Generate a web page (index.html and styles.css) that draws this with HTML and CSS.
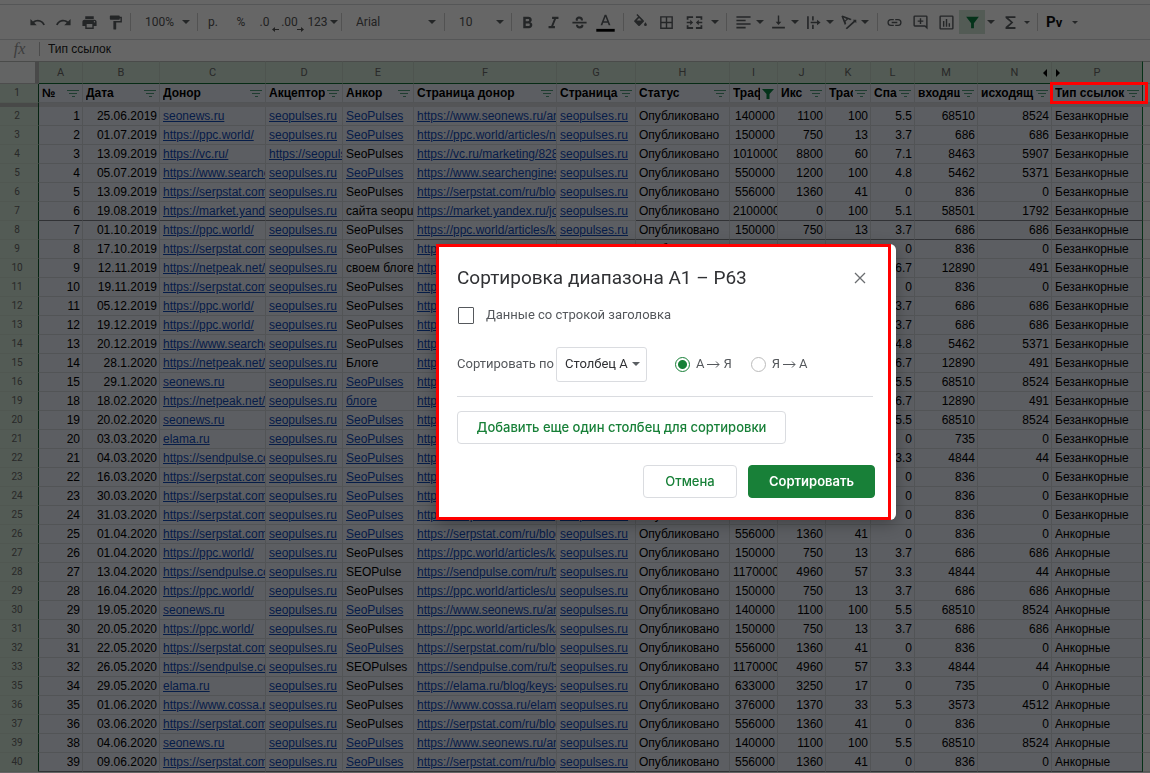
FILE: index.html
```html
<!DOCTYPE html>
<html lang="ru">
<head>
<meta charset="utf-8">
<title>Таблица</title>
<link rel="stylesheet" href="styles.css">
</head>
<body>
<main class="app">
  <div class="toolbar" role="toolbar">
    <button class="tool" aria-label="Отменить"><svg class="icon" viewBox="0 0 24 24"><path d="M12.5 8c-2.65 0-5.05 1-6.9 2.6L2 7v9h9l-3.6-3.6c1.4-1.2 3.1-1.9 5.1-1.9 3.5 0 6.6 2.3 7.6 5.5l2.4-.8C21.1 11 17.2 8 12.500 8z"/></svg></button>
    <button class="tool" aria-label="Повторить"><svg class="icon" viewBox="0 0 24 24"><path d="M18.400 10.600C16.550 9 14.150 8 11.500 8c-4.650 0-8.600 3-10 7.200l2.400.8c1-3.200 4.100-5.500 7.600-5.500 2 0 3.700.7 5.100 1.900L13 16h9V7z"/></svg></button>
    <button class="tool" aria-label="Печать"><svg class="icon" viewBox="0 0 24 24"><path d="M19 8H5c-1.700 0-3 1.300-3 3v6h4v4h12v-4h4v-6c0-1.700-1.300-3-3-3zm-3 11H8v-5h8zm3-7a1 1 0 1 1 0-2 1 1 0 0 1 0 2zM18 3H6v4h12z"/></svg></button>
    <button class="tool" aria-label="Копировать форматирование"><svg class="icon" viewBox="0 0 24 24"><path d="M18 4V3c0-.6-.4-1-1-1H5c-.6 0-1 .4-1 1v4c0 .6.4 1 1 1h12c.6 0 1-.4 1-1V6h1v4H9v11c0 .6.4 1 1 1h2c.6 0 1-.4 1-1v-9h8V4z"/></svg></button>
    <span class="sep sep-l"></span>
    <span class="pick pick-s"><select aria-label="Масштаб"><option>100%</option></select><i class="caret"></i></span>
    <span class="sep"></span>
    <button class="tool first">р.</button>
    <button class="tool">%</button>
    <button class="tool decimal">.0<svg class="under" viewBox="0 0 7 5"><path d="M0 2.500 3 0v2h4v1H3v2z"/></svg></button>
    <button class="tool decimal">.00<svg class="under" viewBox="0 0 7 5"><path d="M7 2.500 4 0v2H0v1h4v2z"/></svg></button>
    <button class="tool format">123<i class="caret"></i></button>
    <span class="sep"></span>
    <span class="pick pick-l"><select aria-label="Шрифт"><option>Arial</option></select><i class="caret"></i></span>
    <span class="sep"></span>
    <span class="pick pick-s"><select aria-label="Размер"><option>10</option></select><i class="caret"></i></span>
    <span class="sep sep-r"></span>
    <button class="tool" aria-label="Полужирный"><svg class="icon" viewBox="0 0 24 24"><path d="M16 11.800c1.200-.8 2-2 2-3.300C18 5.700 15.900 4 13.200 4H6v16h8.100c2.700 0 4.700-2 4.700-4.500 0-1.800-1.100-3.100-2.800-3.700zM9.500 7h3.300c1 0 1.700.6 1.700 1.600s-.7 1.700-1.700 1.700H9.500zm4 10h-4v-3.600h4c1 0 1.800.7 1.800 1.800s-.8 1.800-1.800 1.800z"/></svg></button>
    <button class="tool" aria-label="Курсив"><svg class="icon" viewBox="0 0 24 24"><path d="M10 4v3h2.700l-4 10H5v3h9v-3h-2.400l4-10H19V4z"/></svg></button>
    <button class="tool" aria-label="Зачеркнутый"><svg class="icon" viewBox="0 0 24 24"><path d="M2 11h20v2.500H2zM17 9h-3c0-1.600-1-2.300-2.300-2.300S9.500 7.300 9.500 8.300c0 .7.300 1 .8 1.400H7c-1.300-3.400 1.300-6 4.800-6S17 5.700 17 9zM7 15h3c0 1.500 1 2.300 2.400 2.300 1.300 0 2.200-.6 2.200-1.600 0-.3 0-.5-.2-.7h3c.8 3-1.400 5.300-5 5.300S7 18 7 15z"/></svg></button>
    <button class="tool" aria-label="Цвет текста"><svg class="icon" viewBox="0 0 24 24"><path d="M10.800 1 5 16h2.500l1.300-3.500h6.400l1.300 3.500H19L13.200 1zm-1.200 9.300L12 3.800l2.400 6.500z"/><path class="black" d="M-1 21h26v4H-1z"/></svg></button>
    <span class="sep sep-m"></span>
    <button class="tool" aria-label="Цвет заливки"><svg class="icon" viewBox="0 0 24 24"><path d="M16.600 9 7.600 0 6.200 1.400l2.400 2.400-5.200 5.200a1.500 1.500 0 0 0 0 2.100l5.500 5.500c.6.6 1.500.6 2.100 0l5.500-5.500c.6-.6.6-1.500.1-2.100zM19 11.500s-2 2.200-2 3.500a2 2 0 0 0 4 0c0-1.300-2-3.500-2-3.500zM6.600 9 10 5.600 13.400 9z" fill-rule="evenodd"/></svg></button>
    <button class="tool" aria-label="Границы"><svg class="icon" viewBox="0 0 24 24"><path d="M3 3v18h18V3zm8 16H5v-6h6zm0-8H5V5h6zm8 8h-6v-6h6zm0-8h-6V5h6z"/></svg></button>
    <button class="split merge" aria-label="Объединить ячейки"><svg class="icon" viewBox="0 0 24 24"><path d="M1 3h9v2.500H3.500V8H1zm13 0h9v5h-2.500V5.500H14zM1 16h2.500v2.500H10V21H1zm19.500 0H23v5h-9v-2.500h6.500zM1 11h5V8l4 4-4 4v-3H1zm22 0h-5V8l-4 4 4 4v-3h5z"/></svg><i class="caret"></i></button>
    <span class="sep sep-m"></span>
    <button class="split" aria-label="Выравнивание"><svg class="icon" viewBox="0 0 24 24"><path d="M2 3h20v2.300H2zm0 5h13v2.300H2zm0 5h20v2.300H2zm0 5h13v2.300H2z"/></svg><i class="caret"></i></button>
    <button class="split" aria-label="Вертикальное выравнивание"><svg class="icon" viewBox="0 0 24 24"><path d="M16 11h-3V2h-2v9H8l4 4.500zM3 18h18v2.500H3z"/></svg><i class="caret"></i></button>
    <button class="split" aria-label="Перенос текста"><svg class="icon" viewBox="0 0 24 24"><path d="M3 3h2.300v18H3zm7 0h2.300v6H10zm0 12h2.300v6H10zm-2-4h9V8l5 4-5 4v-3H8z"/></svg><i class="caret"></i></button>
    <button class="split" aria-label="Поворот текста"><svg class="icon" viewBox="0 0 24 24"><path fill-rule="evenodd" d="M2 3.200 3.500 2l13 5-2 1.700-3-1.200-3.700 3.200 1 3-2 1.700zM5 5l2 4 2.300-2zM8 20 19.500 9.500 18 8h5v5l-1.700-1.700L9.800 21.700z"/></svg><i class="caret"></i></button>
    <span class="sep sep-x"></span>
    <button class="tool" aria-label="Вставить ссылку"><svg class="icon" viewBox="0 0 24 24"><path d="M3.900 12c0-1.700 1.400-3.100 3.100-3.100h4V7H7a5 5 0 0 0 0 10h4v-1.900H7A3.100 3.100 0 0 1 3.900 12zM8 13h8v-2H8zm9-6h-4v1.900h4a3.100 3.100 0 0 1 0 6.200h-4V17h4a5 5 0 0 0 0-10z"/></svg></button>
    <button class="tool" aria-label="Комментарий"><svg class="icon" viewBox="0 0 24 24"><path fill-rule="evenodd" d="M4 2h16a2 2 0 0 1 2 2v18l-4-4H4a2 2 0 0 1-2-2V4a2 2 0 0 1 2-2zm0 14h14.800l1.200 1.200V4H4zM11 6h2v3h3v2h-3v3h-2v-3H8V9h3z"/></svg></button>
    <button class="tool" aria-label="Диаграмма"><svg class="icon" viewBox="0 0 24 24"><path fill-rule="evenodd" d="M20 2H4a2 2 0 0 0-2 2v16c0 1.100.9 2 2 2h16a2 2 0 0 0 2-2V4a2 2 0 0 0-2-2zm0 18H4V4h16zM7 10h2v8H7zm4-3h2v11h-2zm4 6h2v5h-2z"/></svg></button>
    <button class="tool on" aria-label="Фильтр"><svg class="icon" viewBox="0 0 24 24"><path d="M3 4h18l-7 9v7h-4v-7z"/></svg></button>
    <i class="caret lone"></i>
    <button class="split sum" aria-label="Функции"><svg class="icon" viewBox="0 0 24 24"><path d="M19 3H5v2.500l7.500 6.500L5 18.500V21h14v-2.500H9l7-6.500-7-6.500h10z"/></svg><i class="caret small"></i></button>
    <span class="sep sep-m"></span>
    <button class="split script"><b>Р<small>v</small></b><i class="caret small"></i></button>
  </div>

  <div class="formula">
    <label class="fx" for="fx">fx</label>
    <input id="fx" class="fx-input" value="Тип ссылок">
  </div>

  <table class="sheet">
    <colgroup><col class="c-n"><col class="c-a"><col class="c-b"><col class="c-c"><col class="c-b"><col class="c-e"><col class="c-f"><col class="c-g"><col class="c-h"><col class="c-i"><col class="c-i"><col class="c-k"><col class="c-a"><col class="c-m"><col class="c-o"><col class="c-p"><col></colgroup>
    <thead>
      <tr class="letters"><th class="corner"></th><th>A</th><th>B</th><th>C</th><th>D</th><th>E</th><th>F</th><th>G</th><th>H</th><th>I</th><th>J</th><th>K</th><th>L</th><th>M</th><th class="before">N</th><th class="after">P</th><th class="rest"></th></tr>
      <tr class="titles" id="titles"><th class="num">1</th></tr>
      <tr class="freeze"><th class="num"></th><td colspan="15"></td><td class="rest"></td></tr>
    </thead>
    <tbody id="rows"></tbody>
  </table>
</main>

<div class="backdrop"></div>
<div class="mark-header"></div>

<form class="dialog" role="dialog" aria-labelledby="dlg-title">
  <div class="dialog-head">
    <h1 class="dialog-title" id="dlg-title">Сортировка диапазона A1 – P63</h1>
    <button type="button" class="close" aria-label="Закрыть"><svg viewBox="0 0 12 12"><path d="M1 1l10 10M11 1 1 11"/></svg></button>
  </div>
  <label class="check"><input type="checkbox">Данные со строкой заголовка</label>
  <div class="sort-row">
    <label for="col">Сортировать по</label>
    <span class="column-pick"><select id="col"><option>Столбец A</option></select><i class="caret"></i></span>
    <label class="radio"><input type="radio" name="dir" checked>А<svg class="arrow" viewBox="0 0 13 7"><path d="M0 3.500h12M9 .5l3 3-3 3"/></svg>Я</label>
    <label class="radio"><input type="radio" name="dir">Я<svg class="arrow" viewBox="0 0 13 7"><path d="M0 3.500h12M9 .5l3 3-3 3"/></svg>А</label>
  </div>
  <button type="button" class="btn btn-add">Добавить еще один столбец для сортировки</button>
  <div class="actions">
    <button type="button" class="btn btn-cancel">Отмена</button>
    <button type="button" class="btn btn-sort">Сортировать</button>
  </div>
  <div class="mark-dialog"></div>
</form>
<script src="sheet.js"></script>
</body>
</html>
```
FILE: styles.css
```css
* { box-sizing: border-box; }
body { margin: 0; background: #fff; font-family: "Liberation Sans", Arial, sans-serif; overflow: hidden; }
button, select, input { font: inherit; color: inherit; }
button { background: none; border: 0; padding: 0; }
select { appearance: none; background: none; border: 0; padding: 0; outline: 0; }

.app { padding-top: 4px; color: #444; }
.toolbar { display: flex; align-items: center; height: 36px; padding-left: 24px; border-top: 1px solid #d4d6d9; border-bottom: 1px solid #d4d6d9; font: 12px/16px Roboto, sans-serif; color: #555; white-space: nowrap; }
.tool { flex: none; display: flex; align-items: center; justify-content: center; width: 26px; height: 24px; }
.icon { flex: none; width: 17px; height: 17px; fill: #5b5f63; overflow: visible; }
.black { fill: #000; }
.sep { flex: none; width: 1px; height: 18px; background: #ccc; }
.sep-l { margin-left: 2px; }
.sep-r { margin-right: 2px; }
.sep-m { margin: 0 3px 0 5px; }
.sep-x { margin: 0 3px 0 7px; }
.caret { flex: none; width: 0; height: 0; border: 4px solid transparent; border-top-color: #5b5f63; border-bottom: 0; }
.caret.small { border-width: 3px; border-bottom: 0; }
.caret.lone { margin: 0 2px; }
.pick { flex: none; display: flex; align-items: center; justify-content: space-between; padding: 0 7px 0 14px; }
.pick-s { width: 66px; }
.pick-l { width: 102px; padding-right: 8px; }
.first { width: 30px; }
.decimal { position: relative; width: 25px; padding-right: 4px; }
.under { position: absolute; right: 0; bottom: 2px; width: 7px; height: 5px; fill: #555; }
.format { width: 37px; gap: 2px; }
.split { flex: none; display: flex; align-items: center; gap: 4px; width: 35px; height: 24px; padding-left: 5px; }
.merge { width: 42px; gap: 8px; padding-left: 7px; }
.on { background: #cfe3d5; }
.on .icon { fill: #0b8043; }
.sum { gap: 5px; }
.script { gap: 10px; }
.script b { font: 700 15px/16px Roboto, sans-serif; color: #111; }
.script small { font-size: 13px; }

.formula { display: flex; align-items: center; height: 21px; padding-bottom: 3px; }
.fx { width: 40px; height: 14px; border-right: 1px solid #bbb; text-align: center; font: italic 16px/14px "Liberation Serif", serif; color: #999; }
.fx-input { flex: 1; border: 0; padding: 0 8px; background: none; font-size: 12px; line-height: 16px; color: #222; outline: 0; }

.sheet { width: 100%; table-layout: fixed; border-collapse: separate; border-spacing: 0; font-size: 12px; line-height: 17px; color: #000; }
.c-n { width: 39px; } .c-a { width: 44px; } .c-b { width: 77px; } .c-c { width: 106px; }
.c-e { width: 71px; } .c-f { width: 143px; } .c-g { width: 79px; } .c-h { width: 94px; }
.c-i { width: 48px; } .c-k { width: 45px; } .c-m { width: 63px; } .c-o { width: 74px; } .c-p { width: 91px; }
.sheet th, .sheet td { height: 19px; padding: 1px 2px 0 3px; border-right: 1px solid #ced1d8; border-bottom: 1px solid #ced1d8; background: #e6ebf5; overflow: hidden; white-space: nowrap; text-align: left; }
.sheet .letters th { position: relative; height: 23px; padding: 0; background: #d0e4d4; border-top: 1px solid #b8bcba; border-right-color: #c3d3c6; border-bottom-color: #0f6b33; text-align: center; font: 11px/18px Roboto, sans-serif; color: #666; }
.sheet .letters .corner { background: #f8f9fa; border-right: 4px solid #b7b7b7; border-bottom-color: #c0c0c0; }
.before::after, .after::before { content: ""; position: absolute; top: 7px; border: 4px solid transparent; }
.before::after { right: 4px; border-right-color: #000; border-left: 0; }
.after::before { left: 4px; border-left-color: #000; border-right: 0; }
.sheet .num { padding: 0 4px 0 0; background: #d0e4d4; border-right-color: #0f5a2c; border-bottom-color: #c8dacb; text-align: center; font: 10px/16px Roboto, sans-serif; color: #666; }
.sheet .rest, .sheet .letters .rest { background: #fff; border-right: 0; border-bottom-color: #d8d8d8; }
.sheet .last, .sheet .letters .after { border-right-color: #0f7a3a; }
.sheet .freeze th, .sheet .freeze td { height: 4px; padding: 0; border-bottom: 0; background: #d2d4d9; }
.sheet .freeze .num { background: #b3b7b4; }
.sheet .freeze .rest { background: #ddd; }
.title { display: flex; align-items: center; gap: 2px; padding-right: 1px; font-weight: 700; }
.title-text { flex: 1; overflow: hidden; }
.filter { flex: none; width: 12px; height: 8px; fill: #4f9a78; }
.filter.active { height: 10px; fill: #0b8043; }
.sheet td.right { text-align: right; }
.sheet td.dark { border-bottom-color: #7b7e84; }
.sheet a { color: #1149b5; }

.backdrop { position: fixed; inset: 0; background: rgba(0, 0, 0, .6); }
.mark-header { position: absolute; left: 1050px; top: 82px; width: 98px; height: 22px; border: 3px solid #f00; }

.dialog { position: absolute; left: 436px; top: 244px; width: 460px; padding: 20px 21px 22px; border-radius: 6px; background: #fff; box-shadow: 0 4px 16px rgba(0, 0, 0, .3); font: 13px/18px Roboto, sans-serif; color: #55585c; }
.mark-dialog { position: absolute; inset: 0 5px 0 0; border: 3px solid #f00; pointer-events: none; }
.dialog-head { display: flex; align-items: center; justify-content: space-between; height: 28px; padding-right: 9px; }
.dialog-title { margin: 0; font: 400 19px/28px Roboto, sans-serif; color: #303134; }
.close { width: 12px; height: 12px; }
.close svg { display: block; width: 12px; height: 12px; stroke: #6a6d70; stroke-width: 1.300; fill: none; }
.check { display: flex; align-items: center; gap: 12px; margin: 14px 0 0 1px; }
.check input { appearance: none; width: 16px; height: 17px; margin: 0; border: 1px solid #55585c; border-radius: 1px; }
.sort-row { display: flex; align-items: center; height: 73px; border-bottom: 1px solid #dadce0; margin-right: 2px; padding-top: 8px; }
.column-pick { display: flex; align-items: center; gap: 4px; height: 35px; margin: 0 28px 0 2px; padding: 0 6px 0 8px; border: 1px solid #dadce0; border-radius: 3px; color: #303134; }
.radio { display: flex; align-items: center; margin-right: 19px; }
.radio input { appearance: none; width: 15px; height: 15px; margin: 0 6px 0 0; border: 1px solid #bbb; border-radius: 50%; }
.radio input:checked { border: 1px solid #188038; background: radial-gradient(circle, #188038 4px, #fff 5px); }
.arrow { width: 13px; height: 7px; margin: 0 3px; stroke: #55585c; fill: none; }
.btn { height: 33px; padding-bottom: 2px; border: 1px solid #dadce0; border-radius: 4px; font: 500 13px/18px "Inter", sans-serif; color: #188038; background: #fff; }
.btn-add { margin-top: 14px; width: 329px; }
.actions { display: flex; justify-content: flex-end; gap: 11px; margin-top: 21px; }
.btn-cancel { width: 94px; }
.btn-sort { width: 127px; border-color: #188038; background: #188038; color: #fff; font-weight: 600; }
```
FILE: sheet.js
```js
const titles = ["№", "Дата", "Донор", "Акцептор", "Анкор", "Страница донор", "Страница", "Статус", "Траф", "Икс", "Траст", "Спам", "входящ", "исходящ", "Тип ссылок"];

// donor link, page link, then traffic, index, trust, spam, incoming, outgoing
const sites = {
  seonews: ["seonews.ru", "https://www.seonews.ru/art", 140000, 1100, 100, 5.5, 68510, 8524],
  ppc: ["https://ppc.world/", "https://ppc.world/articles/ka", 150000, 750, 13, 3.7, 686, 686],
  vc: ["https://vc.ru/", "https://vc.ru/marketing/828", 1010000, 8800, 60, 7.1, 8463, 5907],
  search: ["https://www.searche", "https://www.searchengines", 550000, 1200, 100, 4.8, 5462, 5371],
  serp: ["https://serpstat.com", "https://serpstat.com/ru/blog", 556000, 1360, 41, 0, 836, 0],
  market: ["https://market.yande", "https://market.yandex.ru/jo", 2100000, 0, 100, 5.1, 58501, 1792],
  netpeak: ["https://netpeak.net/", "https://netpeak.net", "", "", "", 6.7, 12890, 491],
  elama: ["elama.ru", "https://elama.ru/blog/keys-", 633000, 3250, 17, 0, 735, 0],
  send: ["https://sendpulse.co", "https://sendpulse.com/ru/bl", 1170000, 4960, 57, 3.3, 4844, 44],
  cossa: ["https://www.cossa.ru", "https://www.cossa.ru/elama", 376000, 1370, 33, 5.3, 3573, 4512]
};

// number, date, site, anchor (a leading * marks a link), page override
const records = [
  [1, "25.06.2019", "seonews", "*SeoPulses"],
  [2, "01.07.2019", "ppc", "*SeoPulses", "https://ppc.world/articles/ne"],
  [3, "13.09.2019", "vc", "SeoPulses"],
  [4, "05.07.2019", "search", "*SeoPulses"],
  [5, "13.09.2019", "serp", "SeoPulses"],
  [6, "19.08.2019", "market", "сайта seopu"],
  [7, "01.10.2019", "ppc", "SeoPulses"],
  [8, "17.10.2019", "serp", "SeoPulses"],
  [9, "12.11.2019", "netpeak", "своем блоге"],
  [10, "19.11.2019", "serp", "SeoPulses"],
  [11, "05.12.2019", "ppc", "SeoPulses"],
  [12, "19.12.2019", "ppc", "SeoPulses"],
  [13, "20.12.2019", "search", "SeoPulses"],
  [14, "28.1.2020", "netpeak", "Блоге"],
  [15, "29.1.2020", "seonews", "*SeoPulses"],
  [18, "18.02.2020", "netpeak", "*блоге"],
  [19, "20.02.2020", "seonews", "*SeoPulses"],
  [20, "03.03.2020", "elama", "*SeoPulses"],
  [21, "04.03.2020", "send", "*SeoPulses"],
  [22, "16.03.2020", "serp", "*SeoPulses"],
  [23, "30.03.2020", "serp", "*SeoPulses"],
  [24, "31.03.2020", "serp", "*SeoPulses"],
  [25, "01.04.2020", "serp", "*SeoPulses"],
  [26, "01.04.2020", "ppc", "SeoPulses"],
  [27, "13.04.2020", "send", "SEOPulse"],
  [28, "16.04.2020", "ppc", "SeoPulses", "https://ppc.world/articles/us"],
  [29, "19.05.2020", "seonews", "*SeoPulses"],
  [30, "20.05.2020", "ppc", "SeoPulses"],
  [31, "22.05.2020", "serp", "*SeoPulses"],
  [32, "26.05.2020", "send", "SEOPulses"],
  [34, "29.05.2020", "elama", "SeoPulses"],
  [35, "01.06.2020", "cossa", "SeoPulses"],
  [36, "03.06.2020", "serp", "SeoPulses"],
  [38, "04.06.2020", "seonews", "*SeoPulses"],
  [39, "09.06.2020", "serp", "*SeoPulses"]
];

const link = text => `<a href="#">${text}</a>`;
const lines = '<svg class="filter" viewBox="0 0 12 8"><path d="M0 0h12v1H0zM2 3h8v1H2zM5 6h3v1H5z"/></svg>';
const funnel = '<svg class="filter active" viewBox="0 0 12 10"><path d="M0 0h12L7.500 5v5h-3V5z"/></svg>';

document.getElementById("titles").insertAdjacentHTML("beforeend", titles.map((t, i) =>
  `<th class="${i === 14 ? "last" : ""}"><div class="title"><span class="title-text">${t}</span>${i === 8 ? funnel : lines}</div></th>`
).join("") + '<th class="rest"></th>');

document.getElementById("rows").innerHTML = records.map(([n, date, key, anchor, page]) => {
  const [donor, defaultPage, ...numbers] = sites[key];
  const cells = [
    n, date, link(donor),
    link(n === 3 ? "https://seopuls" : "seopulses.ru"),
    anchor[0] === "*" ? link(anchor.slice(1)) : anchor,
    link(page || defaultPage), link("seopulses.ru"), "Опубликовано",
    ...numbers, n < 25 ? "Безанкорные" : "Анкорные"
  ];
  return `<tr><th class="num">${n + 1}</th>` + cells.map((c, i) => {
    const cls = [];
    if (i < 2 || (i > 7 && i < 14)) cls.push("right");
    if (i === 14) cls.push("last");
    if ((n === 6 && i !== 5 && i !== 6) || (n === 7 && i > 4) || n === 39) cls.push("dark");
    return `<td class="${cls.join(" ")}">${c}</td>`;
  }).join("") + '<td class="rest"></td></tr>';
}).join("");
```
